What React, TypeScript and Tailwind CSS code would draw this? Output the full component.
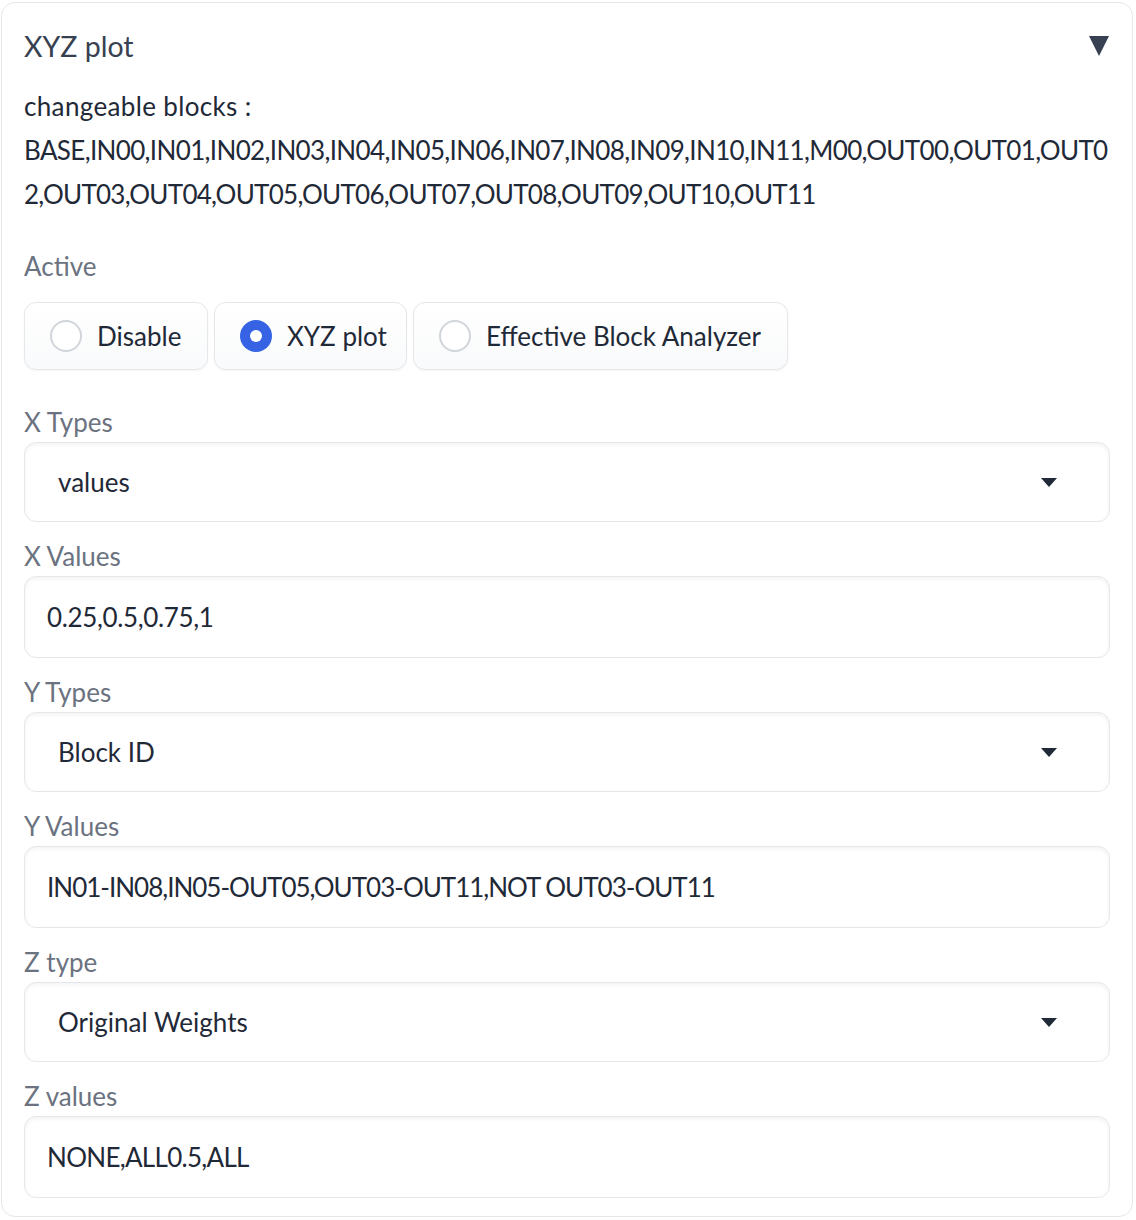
import { useState } from "react"

const font = { fontFamily: "Lato, 'Noto Sans', sans-serif" }

function Label({ children, className = "" }: { children: React.ReactNode; className?: string }) {
  return <div className={`text-[26px] leading-[28px] text-[#6b7280] ${className}`}>{children}</div>
}

function Dropdown({ value }: { value: string }) {
  return (
    <div className="mt-[6px] flex h-[80px] items-center justify-between rounded-[12px] border border-[#e5e7eb] bg-white pl-[33px] pr-[52px] shadow-[inset_0_2px_4px_rgba(0,0,0,0.05)]">
      <span className="text-[26px] text-[#1f2937]">{value}</span>
      <svg width="16" height="9" viewBox="0 0 16 9">
        <polygon points="0,0 16,0 8,9" fill="#1f2937" />
      </svg>
    </div>
  )
}

function TextBox({ value, tracking }: { value: string; tracking: string }) {
  return (
    <div className="mt-[6px] flex h-[82px] items-center rounded-[12px] border border-[#e5e7eb] bg-white px-[22px] shadow-[inset_0_2px_4px_rgba(0,0,0,0.05)]">
      <span className={`text-[26px] text-[#1f2937] whitespace-nowrap ${tracking}`}>{value}</span>
    </div>
  )
}

const options = [
  { label: "Disable", width: "w-[184px]" },
  { label: "XYZ plot", width: "w-[193px]" },
  { label: "Effective Block Analyzer", width: "w-[375px]" },
]

export default function App() {
  const [active, setActive] = useState("XYZ plot")

  return (
    <div className="min-h-screen bg-white pt-[2px] pl-[1px]" style={font}>
      <div className="w-[1132px] rounded-[14px] border border-[#e5e7eb] bg-white px-[22px] pt-[20px] pb-[18px]">
        {/* header */}
        <div className="flex items-center justify-between">
          <span className="text-[28.5px] leading-[46px] text-[#374151]">XYZ plot</span>
          <svg width="20" height="20" viewBox="0 0 20 20" className="mr-[1px]">
            <polygon points="0,0 20,0 10,20" fill="#374151" />
          </svg>
        </div>

        <div className="mt-[15px] text-[26px] leading-[44px] text-[#1f2937] whitespace-nowrap">
          <div className="tracking-[0.35px]">changeable blocks :</div>
          <div className="tracking-[-0.65px]">BASE,IN00,IN01,IN02,IN03,IN04,IN05,IN06,IN07,IN08,IN09,IN10,IN11,M00,OUT00,OUT01,OUT0</div>
          <div className="tracking-[-0.72px]">2,OUT03,OUT04,OUT05,OUT06,OUT07,OUT08,OUT09,OUT10,OUT11</div>
        </div>

        <Label className="mt-[36px]">Active</Label>
        <div className="mt-[22px] flex gap-[6px]">
          {options.map((o) => {
            const on = active === o.label
            return (
              <button
                key={o.label}
                onClick={() => setActive(o.label)}
                className={`flex h-[68px] ${o.width} items-center gap-[15px] rounded-[12px] border border-[#e5e7eb] bg-gradient-to-b from-white to-[#f9fafb] pl-[25px] pr-[20px] shadow-[0_1px_2px_rgba(0,0,0,0.05)]`}
              >
                {on ? (
                  <span className="flex h-[32px] w-[32px] shrink-0 items-center justify-center rounded-full bg-[#3563e3]">
                    <span className="h-[12px] w-[12px] rounded-full bg-white" />
                  </span>
                ) : (
                  <span className="h-[32px] w-[32px] shrink-0 rounded-full border-2 border-[#d1d5db] bg-white" />
                )}
                <span className="text-[26px] text-[#1f2937] whitespace-nowrap">{o.label}</span>
              </button>
            )
          })}
        </div>

        <Label className="mt-[38px]">X Types</Label>
        <Dropdown value="values" />

        <Label className="mt-[20px]">X Values</Label>
        <TextBox value="0.25,0.5,0.75,1" tracking="tracking-[-0.35px]" />

        <Label className="mt-[20px]">Y Types</Label>
        <Dropdown value="Block ID" />

        <Label className="mt-[20px]">Y Values</Label>
        <TextBox value="IN01-IN08,IN05-OUT05,OUT03-OUT11,NOT OUT03-OUT11" tracking="tracking-[-1px]" />

        <Label className="mt-[20px]">Z type</Label>
        <Dropdown value="Original Weights" />

        <Label className="mt-[20px]">Z values</Label>
        <TextBox value="NONE,ALL0.5,ALL" tracking="tracking-[-0.7px]" />
      </div>
    </div>
  )
}
